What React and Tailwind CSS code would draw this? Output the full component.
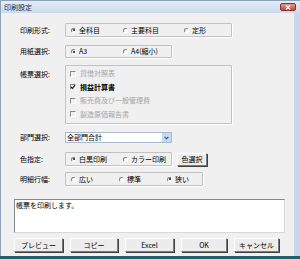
const font = "font-['Noto_Sans_CJK_JP','Noto_Sans',sans-serif]"

function Radio({ label, checked, w }) {
	return (
		<div className={`flex items-center gap-[3px] ${w}`}>
			<span className="relative h-[5px] w-[5px] shrink-0 rounded-full border border-t-[#808080] border-l-[#808080] border-b-white border-r-white bg-white">
				{checked && <span className="absolute left-[0.5px] top-[0.5px] h-[2px] w-[2px] rounded-full bg-[#111]" />}
			</span>
			<span className="leading-none">{label}</span>
		</div>
	)
}

function Check({ label, checked, disabled }) {
	return (
		<div className={`flex h-[13.5px] items-center gap-[4px] ${disabled ? 'text-[#a6a6a6]' : 'text-black'}`}>
			<span className="relative h-[6px] w-[6px] shrink-0 border border-t-[#8a8a8a] border-l-[#8a8a8a] border-b-white border-r-white bg-transparent">
				{checked && (
					<svg className="absolute -left-[1px] -top-[1px]" width="6" height="6" viewBox="0 0 6 6">
						<path d="M1 3 L2.4 4.5 L5 1.2" stroke="#111" strokeWidth="1.1" fill="none" />
					</svg>
				)}
			</span>
			<span className={`leading-none ${checked ? 'font-bold' : ''}`}>{label}</span>
		</div>
	)
}

function Group({ children, className }) {
	return (
		<div className={`flex items-center rounded-[1px] border border-[#c2c2c2] shadow-[1px_1px_0_#fff] ${className}`}>
			{children}
		</div>
	)
}

function Btn({ children, className }) {
	return (
		<button className={`flex items-center justify-center border border-t-white border-l-white border-b-[#7a7a7a] border-r-[#7a7a7a] bg-[#ececec] shadow-[1px_1px_0_#404040] leading-none ${className}`}>
			{children}
		</button>
	)
}

export default function App() {
	return (
		<div className={`flex h-[259px] w-[300px] flex-col bg-[#f0f0f0] text-[7px] text-black ${font}`}>
			<div className="flex h-[13px] items-center border-l border-t border-[#8fa3b8] bg-gradient-to-b from-[#e3ecf7] to-[#ccdcee] pl-[3px] pr-[4px]">
				<span className="leading-none text-[#1e2b3a]">印刷設定</span>
				<div className="ml-auto flex h-[8px] w-[16px] items-center justify-center rounded-[2px] border border-[#8a2e2e] bg-gradient-to-b from-[#e49a8f] to-[#c5463a]">
					<svg width="6" height="5" viewBox="0 0 6 5">
						<path d="M1 0.5 L5 4.5 M5 0.5 L1 4.5" stroke="#fff" strokeWidth="1.2" />
					</svg>
				</div>
			</div>
			<div className="flex flex-1 flex-col border-l border-r-[6px] border-l-[#8fa3b8] border-r-[#c7d8eb]">
				<div className="ml-[19px] mt-[10px] flex items-center">
					<span className="w-[45px]">印刷形式:</span>
					<Group className="h-[14px] w-[167px] pl-[5px]">
						<Radio label="全科目" checked w="w-[52px]" />
						<Radio label="主要科目" w="w-[61px]" />
						<Radio label="定形" />
					</Group>
				</div>
				<div className="ml-[19px] mt-[8px] flex items-center">
					<span className="w-[45px]">用紙選択:</span>
					<Group className="h-[13px] w-[107px] pl-[5px]">
						<Radio label="A3" checked w="w-[52px]" />
						<Radio label="A4(縮小)" />
					</Group>
				</div>
				<div className="ml-[19px] mt-[7px] flex items-start">
					<span className="w-[45px] pt-[4px]">帳票選択:</span>
					<div className="flex h-[59px] w-[167px] flex-col rounded-[1px] border border-[#c2c2c2] pl-[4px] pt-[1px] shadow-[1px_1px_0_#fff]">
						<Check label="貸借対照表" disabled />
						<Check label="損益計算書" checked />
						<Check label="販売費及び一般管理費" disabled />
						<Check label="製造原価報告書" disabled />
					</div>
				</div>
				<div className="ml-[19px] mt-[8px] flex items-center">
					<span className="w-[45px]">部門選択:</span>
					<div className="flex h-[11px] w-[107px] items-center border border-[#a9b9cc] bg-white">
						<span className="flex-1 pl-[1px] leading-none">全部門合計</span>
						<span className="flex h-full w-[9px] items-center justify-center bg-[#c6d9f3]">
							<svg width="5" height="4" viewBox="0 0 5 4">
								<path d="M0.6 0.8 L2.5 2.8 L4.4 0.8" stroke="#2d4f91" strokeWidth="1.1" fill="none" />
							</svg>
						</span>
					</div>
				</div>
				<div className="ml-[19px] mt-[9px] flex items-center">
					<span className="w-[45px]">色指定:</span>
					<Group className="h-[14px] w-[107px] pl-[5px]">
						<Radio label="白黒印刷" checked w="w-[52px]" />
						<Radio label="カラー印刷" />
					</Group>
					<Btn className="ml-[5px] h-[13px] w-[30px]">色選択</Btn>
				</div>
				<div className="ml-[19px] mt-[6px] flex items-center">
					<span className="w-[45px]">明細行幅:</span>
					<Group className="h-[14px] w-[138px] pl-[5px]">
						<Radio label="広い" w="w-[48px]" />
						<Radio label="標準" w="w-[48px]" />
						<Radio label="狭い" checked />
					</Group>
				</div>
				<div className="ml-[13px] mt-[13px] h-[34px] w-[271px] border border-t-[#828790] border-l-[#828790] border-b-[#d8d8d8] border-r-[#d8d8d8] bg-white px-[1px] pt-[2px] leading-none">
					帳票を印刷します。
				</div>
				<div className="ml-[13px] mt-[5px] flex gap-[7px]">
					<Btn className="h-[14px] w-[49px]">プレビュー</Btn>
					<Btn className="h-[14px] w-[48px]">コピー</Btn>
					<Btn className="h-[14px] w-[49px]">Excel</Btn>
					<Btn className="h-[14px] w-[46px]">OK</Btn>
					<Btn className="h-[14px] w-[45px]">キャンセル</Btn>
				</div>
			</div>
			<div className="h-[3px] bg-[#1f5f6e]" />
		</div>
	)
}
